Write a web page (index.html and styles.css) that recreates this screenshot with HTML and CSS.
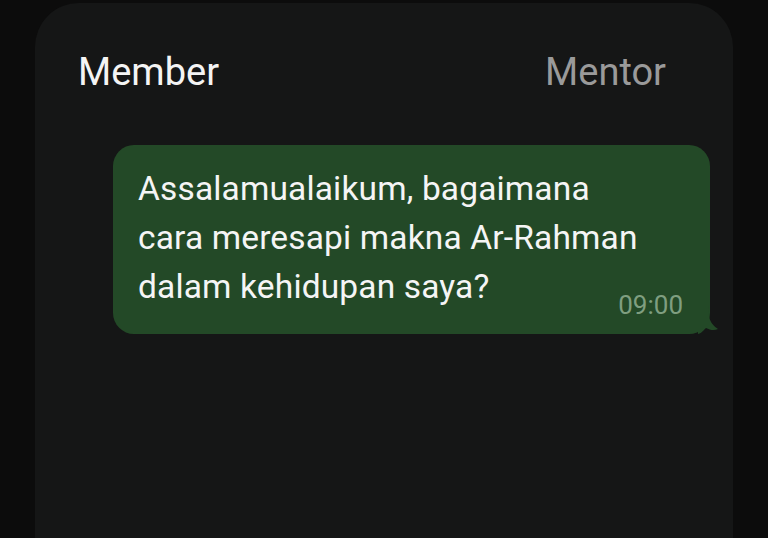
FILE: index.html
```html
<!DOCTYPE html>
<html lang="id">
<head>
  <meta charset="UTF-8" />
  <title>Chat</title>
  <link rel="stylesheet" href="styles.css">
</head>
<body>
  <div class="phone">
    <div class="tabs">
      <span class="tab active">Member</span>
      <span class="tab">Mentor</span>
    </div>

    <div class="chat">
      <div class="bubble">
        <p class="msg">Assalamualaikum, bagaimana<br>cara meresapi makna Ar-Rahman<br>dalam kehidupan saya?</p>
        <span class="time">09:00</span>
        <svg class="tail" width="22" height="28" viewBox="0 0 22 28">
          <path d="M0 0 L10 0 C10 11 12 18 20 23 C16 25 12 24 8 22 C5 25 2 28 0 28 Z" fill="#234927"/>
        </svg>
      </div>
    </div>
  </div>
</body>
</html>
```

FILE: styles.css
```css
html, body {
  height: 100%;
}

body {
  margin: 0;
  background: #0c0c0c;
  font-family: Roboto, "Noto Sans", sans-serif;
  color: #f2f2f2;
  overflow: hidden;
}

.phone {
  margin: 3px 35px 0 35px;
  height: 535px;
  background: #151616;
  border-radius: 44px 44px 0 0;
}

.tabs {
  display: flex;
  justify-content: space-between;
  padding: 45px 67px 0 43px;
  font-size: 38px;
  line-height: 48px;
}

.tab {
  color: #9a9a9a;
}

.tab.active {
  color: #f4f4f4;
}

.chat {
  padding: 49px 23px 0 78px;
}

.bubble {
  position: relative;
  background: #234927;
  border-radius: 21px;
  padding: 19px 26px 23px 25px;
}

.tail {
  position: absolute;
  right: -10px;
  bottom: 0;
  display: block;
}

.msg {
  margin: 0;
  font-size: 33.5px;
  letter-spacing: 0.15px;
  line-height: 49px;
  color: #f5f5f5;
}

.time {
  position: absolute;
  right: 27px;
  bottom: 14px;
  font-size: 26px;
  color: #7f9e80;
}
```
